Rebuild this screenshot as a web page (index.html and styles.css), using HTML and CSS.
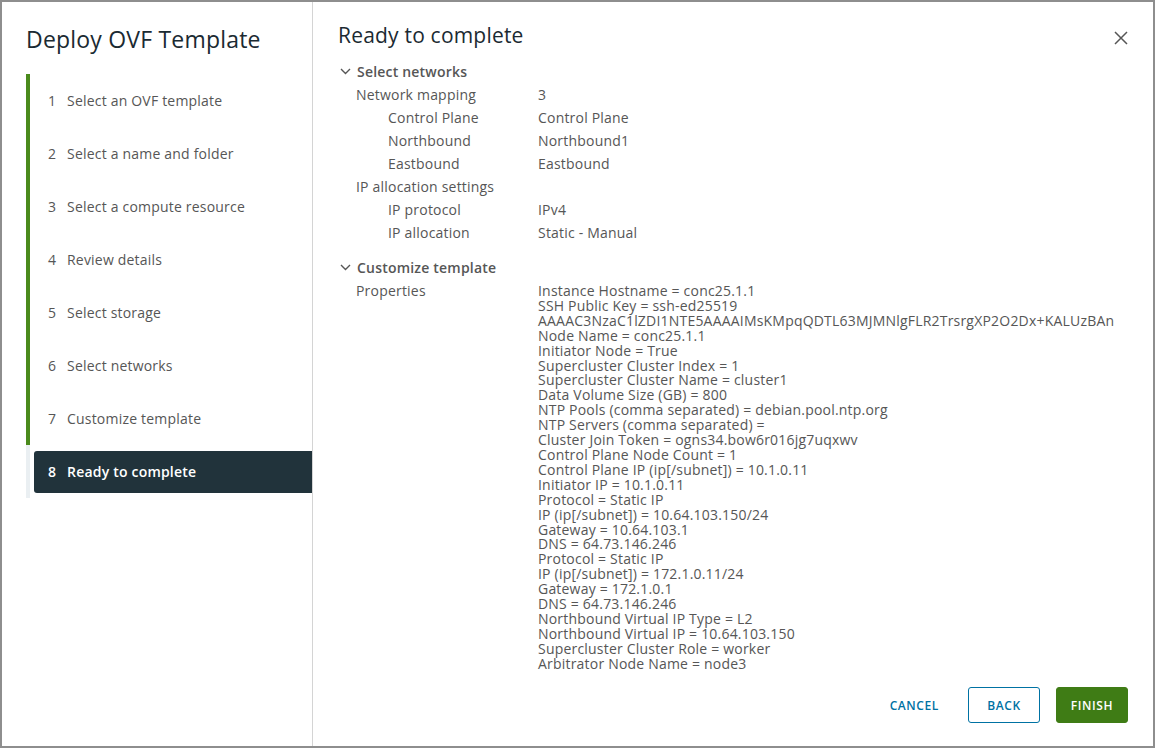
FILE: index.html
```html
<!DOCTYPE html>
<html lang="en">
<head>
  <meta charset="UTF-8" />
  <title>Deploy OVF Template</title>
  <link rel="stylesheet" href="styles.css">
</head>
<body>
  <div class="dialog">
    <!-- wizard steps -->
    <div class="nav">
      <h1 class="wizard-title">Deploy OVF Template</h1>
      <ol class="steps">
        <li class="done"><span class="step"><span class="num">1</span>Select an OVF template</span></li>
        <li class="done"><span class="step"><span class="num">2</span>Select a name and folder</span></li>
        <li class="done"><span class="step"><span class="num">3</span>Select a compute resource</span></li>
        <li class="done"><span class="step"><span class="num">4</span>Review details</span></li>
        <li class="done"><span class="step"><span class="num">5</span>Select storage</span></li>
        <li class="done"><span class="step"><span class="num">6</span>Select networks</span></li>
        <li class="done"><span class="step"><span class="num">7</span>Customize template</span></li>
        <li class="current"><span class="step"><span class="num">8</span>Ready to complete</span></li>
      </ol>
    </div>

    <div class="main">
      <div class="main-head">
        <h2 class="page-title">Ready to complete</h2>
        <button class="close" aria-label="Close">
          <svg width="14" height="14" viewBox="0 0 14 14"><path d="M1 1L13 13M13 1L1 13" stroke="#565656" stroke-width="1.5" fill="none"/></svg>
        </button>
      </div>

      <div class="content">
        <div class="section">
          <div class="section-head">
            <svg class="chev" width="11" height="7" viewBox="0 0 11 7"><path d="M1 1L5.5 5.5L10 1" stroke="#565656" stroke-width="1.4" fill="none"/></svg>
            Select networks
          </div>
          <div class="row"><div class="label">Network mapping</div><div class="value">3</div></div>
          <div class="row"><div class="label sub">Control Plane</div><div class="value">Control Plane</div></div>
          <div class="row"><div class="label sub">Northbound</div><div class="value">Northbound1</div></div>
          <div class="row"><div class="label sub">Eastbound</div><div class="value">Eastbound</div></div>
          <div class="row"><div class="label">IP allocation settings</div><div class="value"></div></div>
          <div class="row"><div class="label sub">IP protocol</div><div class="value">IPv4</div></div>
          <div class="row"><div class="label sub">IP allocation</div><div class="value">Static - Manual</div></div>
        </div>

        <div class="section">
          <div class="section-head">
            <svg class="chev" width="11" height="7" viewBox="0 0 11 7"><path d="M1 1L5.5 5.5L10 1" stroke="#565656" stroke-width="1.4" fill="none"/></svg>
            Customize template
          </div>
          <div class="row">
            <div class="label">Properties</div>
            <div class="value props">
              <div>Instance Hostname = conc25.1.1</div>
              <div>SSH Public Key = ssh-ed25519</div>
              <div>AAAAC3NzaC1lZDI1NTE5AAAAIMsKMpqQDTL63MJMNlgFLR2TrsrgXP2O2Dx+KALUzBAn</div>
              <div>Node Name = conc25.1.1</div>
              <div>Initiator Node = True</div>
              <div>Supercluster Cluster Index = 1</div>
              <div>Supercluster Cluster Name = cluster1</div>
              <div>Data Volume Size (GB) = 800</div>
              <div>NTP Pools (comma separated) = debian.pool.ntp.org</div>
              <div>NTP Servers (comma separated) =</div>
              <div>Cluster Join Token = ogns34.bow6r016jg7uqxwv</div>
              <div>Control Plane Node Count = 1</div>
              <div>Control Plane IP (ip[/subnet]) = 10.1.0.11</div>
              <div>Initiator IP = 10.1.0.11</div>
              <div>Protocol = Static IP</div>
              <div>IP (ip[/subnet]) = 10.64.103.150/24</div>
              <div>Gateway = 10.64.103.1</div>
              <div>DNS = 64.73.146.246</div>
              <div>Protocol = Static IP</div>
              <div>IP (ip[/subnet]) = 172.1.0.11/24</div>
              <div>Gateway = 172.1.0.1</div>
              <div>DNS = 64.73.146.246</div>
              <div>Northbound Virtual IP Type = L2</div>
              <div>Northbound Virtual IP = 10.64.103.150</div>
              <div>Supercluster Cluster Role = worker</div>
              <div>Arbitrator Node Name = node3</div>
            </div>
          </div>
        </div>
      </div>

      <div class="footer">
        <button class="btn flat">Cancel</button>
        <button class="btn outline">Back</button>
        <button class="btn primary">Finish</button>
      </div>
    </div>
  </div>
</body>
</html>
```

FILE: styles.css
```css
html, body {
  height: 100%;
}
body {
  margin: 0;
  padding: 2px;
  box-sizing: border-box;
  background-color: #8e8e8e;
  font-family: "Open Sans", "Liberation Sans", sans-serif;
  font-size: 14px;
  letter-spacing: 0.2px;
  color: #565656;
}
.dialog {
  display: flex;
  height: 100%;
  background: #FFFFFF;
}

/* left wizard nav */
.nav {
  width: 311px;
  flex-shrink: 0;
  border-right: 1px solid #d4d4d4;
  padding: 22px 0 0 24px;
  box-sizing: border-box;
}
.wizard-title {
  margin: 0;
  font-size: 23px;
  font-weight: 400;
  line-height: 30px;
  color: #1b2a32;
}
.steps {
  list-style: none;
  margin: 20px 0 0 0;
  padding: 0;
}
.steps li {
  height: 53px;
  display: flex;
  align-items: center;
  border-left: 4px solid #4a8a1c;
  padding-left: 4px;
}
.steps li.current {
  border-left-color: #eaeff2;
}
.step {
  display: flex;
  align-items: center;
  flex: 1;
  height: 42px;
  padding-left: 14px;
}
.num {
  width: 19px;
}
.current .step {
  background-color: #21333b;
  color: #FFFFFF;
  font-weight: 600;
  border-radius: 3px 0 0 3px;
}

/* right side */
.main {
  flex: 1;
  min-width: 0;
  display: flex;
  flex-direction: column;
  padding: 0 25px 23px 25px;
}
.main-head {
  display: flex;
  align-items: center;
  justify-content: space-between;
  padding-top: 20px;
}
.page-title {
  margin: 0;
  font-size: 21px;
  font-weight: 400;
  line-height: 26px;
  color: #1b2a32;
}
.close {
  background: none;
  border: none;
  padding: 0;
  margin: 6px 0 0 0;
  cursor: pointer;
  display: flex;
}
.content {
  flex: 1;
  overflow: hidden;
  margin-top: 12px;
}
.section {
  margin-bottom: 12px;
}
.section-head {
  display: flex;
  align-items: center;
  font-weight: 600;
  line-height: 23px;
}
.chev {
  margin: 0 6px 0 2px;
}
.row {
  display: flex;
  line-height: 23px;
  padding-left: 18px;
}
.label {
  width: 182px;
  flex-shrink: 0;
}
.label.sub {
  width: 150px;
  padding-left: 32px;
}
.value {
  white-space: nowrap;
}
.props {
  line-height: 14.9px;
  margin-top: 5px;
}

/* footer buttons */
.footer {
  display: flex;
  justify-content: flex-end;
  gap: 16px;
}
.btn {
  min-width: 72px;
  height: 36px;
  padding: 0 12px;
  font-family: inherit;
  font-size: 12px;
  font-weight: 600;
  letter-spacing: 0.6px;
  text-transform: uppercase;
  border-radius: 3px;
  cursor: pointer;
}
.btn.flat {
  background: none;
  border: 1px solid transparent;
  color: #0072a3;
}
.btn.outline {
  background: #FFFFFF;
  border: 1px solid #0072a3;
  color: #0072a3;
}
.btn.primary {
  background-color: #3f7c15;
  border: 1px solid #3f7c15;
  color: #FFFFFF;
}
```
